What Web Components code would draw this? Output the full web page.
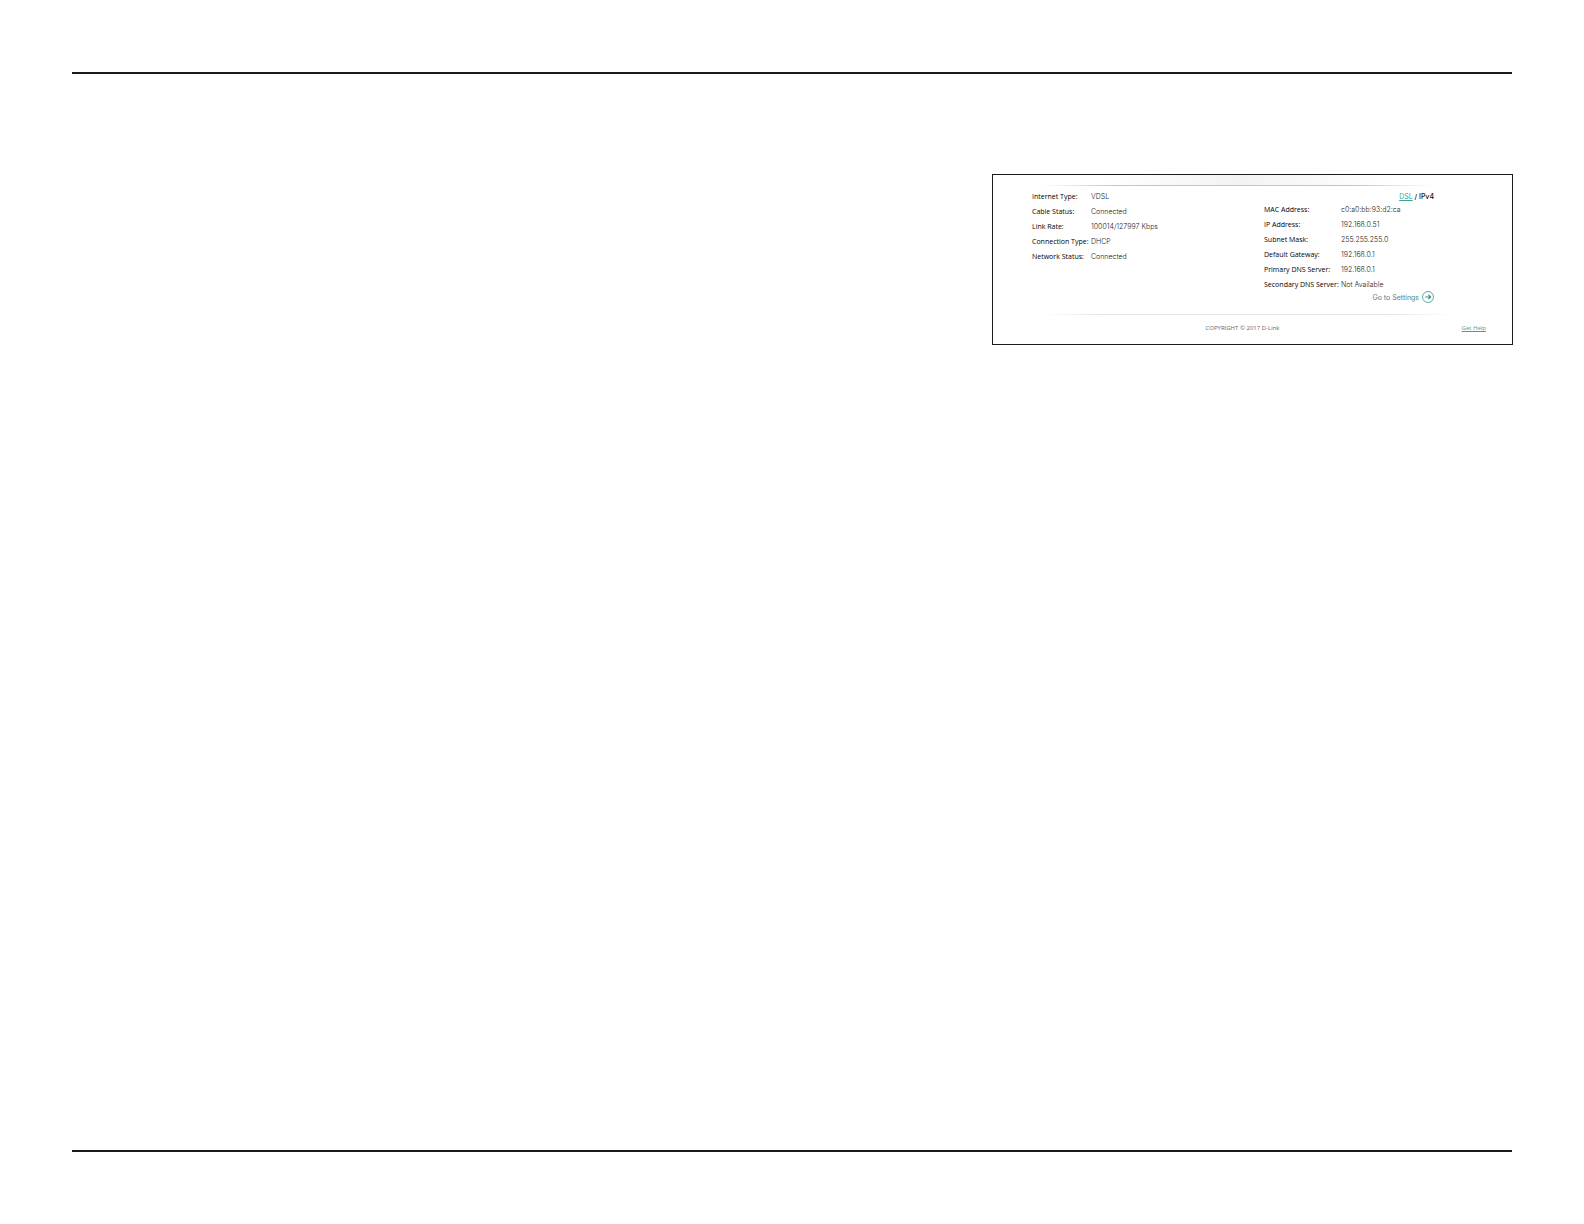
<!DOCTYPE html>
<html lang="en">
<head>
<meta charset="utf-8">
<title>Internet status</title>
<style>
body { margin: 0; background: #fff; font-family: Inter, "Liberation Sans", sans-serif; color: #222; }
</style>
</head>
<body>
<manual-page>
  <status-panel>
    <status-list slot="left" style="--label:59px">
      <status-row label="Internet Type:">VDSL</status-row>
      <status-row label="Cable Status:">Connected</status-row>
      <status-row label="Link Rate:">100014/127997 Kbps</status-row>
      <status-row label="Connection Type:">DHCP</status-row>
      <status-row label="Network Status:">Connected</status-row>
    </status-list>
    <protocol-switch slot="switch"></protocol-switch>
    <status-list slot="right" style="--label:77px">
      <status-row label="MAC Address:">c0:a0:bb:93:d2:ca</status-row>
      <status-row label="IP Address:">192.168.0.51</status-row>
      <status-row label="Subnet Mask:">255.255.255.0</status-row>
      <status-row label="Default Gateway:">192.168.0.1</status-row>
      <status-row label="Primary DNS Server:">192.168.0.1</status-row>
      <status-row label="Secondary DNS Server:">Not Available</status-row>
    </status-list>
    <settings-link slot="settings">Go to Settings</settings-link>
    <panel-footer slot="footer">COPYRIGHT © 2017 D-Link</panel-footer>
  </status-panel>
</manual-page>
<script>
function define(name, html) {
  const template = document.createElement('template');
  template.innerHTML = html;
  customElements.define(name, class extends HTMLElement {
    constructor() {
      super();
      this.attachShadow({ mode: 'open' }).append(template.content.cloneNode(true));
    }
    connectedCallback() {
      const label = this.shadowRoot.querySelector('[data-label]');
      if (label) label.textContent = this.getAttribute('label');
    }
  });
}

define('manual-page', `
<style>
:host { display: flex; box-sizing: border-box; min-height: 100vh; padding: 72px 71px 72px 72px; }
main { flex: 1; display: flex; box-sizing: border-box; justify-content: flex-end; align-items: flex-start;
  padding-top: 100px; border: solid #1c1b1f; border-width: 2px 0; margin-right: 1px; }
::slotted(*) { margin-right: -1px; }
</style>
<main><slot></slot></main>`);

define('status-panel', `
<style>
:host { display: block; box-sizing: border-box; width: 521px; max-width: 100%; border: 1px solid #1c1b1f; background: #fff; }
.shade { height: 10px; margin: 0 78px 0 48px;
  background: linear-gradient(90deg, #fff 15%, #f3f3f3 50%, #fff 90%); }
.rule { height: 1px; margin: 0 78px 0 48px; background: linear-gradient(90deg, #fff, #c4c4c4 20%, #c4c4c4 80%, #fff); }
.body { display: grid; grid-template-columns: 232px 1fr; margin: 3px 78px 0 39px; }
.bottom { height: 1px; margin: 9px 60px 0 48px; background: linear-gradient(90deg, #fff, #e4e4e4 15%, #e4e4e4 85%, #fff); }
</style>
<div class="shade"></div>
<div class="rule"></div>
<div class="body">
  <div><slot name="left"></slot></div>
  <div><slot name="switch"></slot><slot name="right"></slot><slot name="settings"></slot></div>
</div>
<div class="bottom"></div>
<slot name="footer"></slot>`);

define('status-list', `
<style>:host { display: block; font-size: 7px; line-height: 15px; }</style>
<slot></slot>`);

define('status-row', `
<style>
:host { display: flex; white-space: nowrap; }
.label { flex: 0 0 var(--label); color: #000; font-family: "Open Sans", sans-serif; font-weight: 500; }
.value { color: #222; font-weight: 300; }
</style>
<span class="label" data-label></span><span class="value"><slot></slot></span>`);

define('protocol-switch', `
<style>
:host { display: block; text-align: right; font-size: 7px; line-height: 12px; padding-top: 2px; height: 11px; color: #111; font-weight: 500; }
a { color: #3aa39c; font-weight: 400; text-underline-offset: 1px; }
</style>
<a href="#dsl">DSL</a> / IPv4`);

define('settings-link', `
<style>
:host { display: flex; justify-content: flex-end; margin-top: -1px; }
a { display: flex; align-items: flex-start; gap: 3px; font-size: 7px; line-height: 14px; color: #51857f; text-decoration: none; }
svg { display: block; width: 12px; height: 12px; }
</style>
<a href="#settings"><slot></slot>
<svg viewBox="0 0 12 12" fill="none" stroke="#2f9488" aria-hidden="true"><circle cx="6" cy="6" r="5.5" stroke-width=".8"/><path d="M3.2 6h5.3M6.4 3.8 8.6 6 6.4 8.2" stroke-width="1.2"/></svg></a>`);

define('panel-footer', `
<style>
:host { display: grid; grid-template-columns: 1fr auto 1fr; font-family: "Open Sans", sans-serif; font-size: 6px; line-height: 8px; padding: 9px 26px 12px 6px; color: #666; }
span { grid-column: 2; }
a { justify-self: end; color: #4e9992; text-underline-offset: 1px; }
</style>
<span><slot></slot></span><a href="#help">Get Help</a>`);
</script>
</body>
</html>
